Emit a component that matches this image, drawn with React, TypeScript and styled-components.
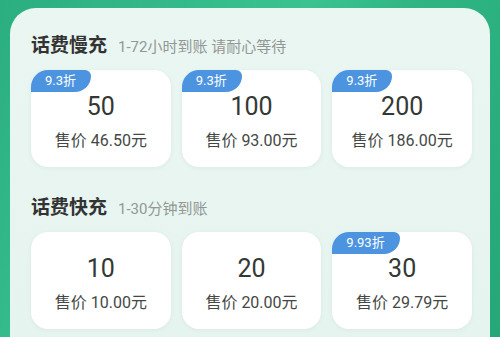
import styled, { createGlobalStyle } from "styled-components";

const GlobalStyle = createGlobalStyle`
  html, body {
    margin: 0;
    padding: 0;
  }
  body {
    width: 500px;
    height: 337px;
    overflow: hidden;
    font-family: Roboto, "Noto Sans CJK SC", "Noto Sans", sans-serif;
    background: linear-gradient(120deg, #2bae80 0%, #3ac391 45%, #2fb584 60%, #25a777 100%);
  }
`;

const Page = styled.div`
  height: 337px;
  padding: 8px 10px 0;
  box-sizing: border-box;
`;

const Panel = styled.div`
  height: 100%;
  box-sizing: border-box;
  background: linear-gradient(180deg, #eaf6f2 0%, #e6f4ef 100%);
  border-radius: 26px 26px 0 0;
  padding: 26px 18px 0 21px;
`;

const Section = styled.section`
  & + & {
    margin-top: 29px;
  }
`;

const SectionHead = styled.div`
  display: flex;
  align-items: baseline;
  height: 24px;
  line-height: 24px;
  margin-bottom: 12px;
`;

const Title = styled.h2`
  margin: 0;
  font-size: 19px;
  font-weight: 700;
  color: #333333;
`;

const Hint = styled.span`
  margin-left: 11px;
  font-size: 15px;
  color: #939794;
`;

const Grid = styled.div`
  display: grid;
  grid-template-columns: repeat(3, 1fr);
  gap: 11px;
`;

const Card = styled.div`
  position: relative;
  height: 97px;
  background: #ffffff;
  border-radius: 17px;
  box-shadow: 0 1px 4px rgba(60, 120, 100, 0.08);
  display: flex;
  flex-direction: column;
  align-items: center;
  padding-top: 22px;
  box-sizing: border-box;
`;

const Badge = styled.span`
  position: absolute;
  top: 0;
  left: 0;
  height: 22px;
  padding: 0 15px 0 14px;
  background: #4d94e0;
  color: #ffffff;
  font-size: 13px;
  line-height: 22px;
  border-radius: 17px 6px 16px 0;
`;

const Face = styled.div`
  font-size: 25px;
  line-height: 30px;
  color: #343834;
`;

const Price = styled.div`
  margin-top: 9px;
  font-size: 16px;
  line-height: 20px;
  color: #444844;
`;

interface Item {
  face: string;
  price: string;
  discount?: string;
}

interface Group {
  title: string;
  hint: string;
  items: Item[];
}

const groups: Group[] = [
  {
    title: "话费慢充",
    hint: "1-72小时到账 请耐心等待",
    items: [
      { face: "50", price: "46.50", discount: "9.3折" },
      { face: "100", price: "93.00", discount: "9.3折" },
      { face: "200", price: "186.00", discount: "9.3折" },
    ],
  },
  {
    title: "话费快充",
    hint: "1-30分钟到账",
    items: [
      { face: "10", price: "10.00" },
      { face: "20", price: "20.00" },
      { face: "30", price: "29.79", discount: "9.93折" },
    ],
  },
];

function App() {
  return (
    <>
      <GlobalStyle />
      <Page>
        <Panel>
          {groups.map((group) => (
            <Section key={group.title}>
              <SectionHead>
                <Title>{group.title}</Title>
                <Hint>{group.hint}</Hint>
              </SectionHead>
              <Grid>
                {group.items.map((item) => (
                  <Card key={item.face}>
                    {item.discount && <Badge>{item.discount}</Badge>}
                    <Face>{item.face}</Face>
                    <Price>售价 {item.price}元</Price>
                  </Card>
                ))}
              </Grid>
            </Section>
          ))}
        </Panel>
      </Page>
    </>
  );
}

export default App;
